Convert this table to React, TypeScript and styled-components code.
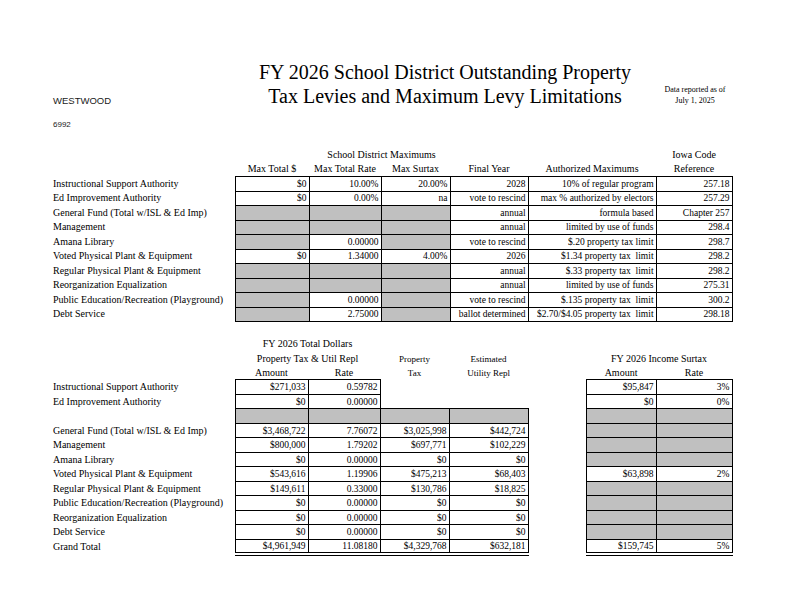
import React from "react";
import styled, { createGlobalStyle } from "styled-components";

const GlobalStyle = createGlobalStyle`
  html, body { margin: 0; padding: 0; background: #fff; }
  body { font-family: "Liberation Serif", "Times New Roman", serif; color: #000; }
`;

const Page = styled.div`
  width: 792px;
  height: 612px;
  box-sizing: border-box;
  padding: 60px 0 0 53px;
  overflow: hidden;
`;

const Header = styled.header`
  display: grid;
  grid-template-columns: 182px 420px 80px;
  align-items: start;
`;

const District = styled.div`
  padding-top: 35px;
  font-family: "Liberation Sans", Arial, sans-serif;
  color: #1a1a1a;
`;

const DistrictName = styled.div`
  font-size: 9.5px;
  line-height: 12px;
`;

const DistrictCode = styled.div`
  margin-top: 13px;
  font-size: 8px;
  line-height: 10px;
`;

const Title = styled.h1`
  margin: 0;
  font-weight: normal;
  font-size: 20px;
  line-height: 24px;
  text-align: center;
`;

const Note = styled.div`
  padding-top: 24px;
  font-size: 8px;
  line-height: 11px;
  text-align: center;
`;

const Sheet = styled.table<{ $top: number }>`
  margin-top: ${(p) => p.$top}px;
  border-collapse: collapse;
  table-layout: fixed;
  width: 679px;
`;

const HeadRow = styled.tr`
  height: 14.3px;
`;

const Row = styled.tr`
  height: 14.5px;
`;

const HeadCell = styled.td<{ $small?: boolean }>`
  padding: 0;
  text-align: center;
  vertical-align: middle;
  white-space: nowrap;
  font-size: ${(p) => (p.$small ? "9px" : "10px")};
  line-height: 12px;
`;

const Label = styled.td`
  padding: 0;
  font-size: 10px;
  line-height: 12px;
  white-space: nowrap;
  text-align: left;
`;

const Cell = styled.td<{ $gray?: boolean; $open?: boolean; $total?: boolean }>`
  padding: 0 2px 0 0;
  font-size: 9.5px;
  line-height: 12px;
  text-align: right;
  white-space: nowrap;
  vertical-align: middle;
  background: ${(p) => (p.$gray ? "#c0c0c0" : "transparent")};
  border: ${(p) => (p.$open ? "none" : "1px solid #000")};
  border-bottom: ${(p) => (p.$open ? "none" : p.$total ? "4px double #000" : "1px solid #000")};
`;

type TopRow = {
  label: string;
  vals: (string | null)[];
  year: string;
  auth: string;
  code: string;
};

const topRows: TopRow[] = [
  { label: "Instructional Support Authority", vals: ["$0", "10.00%", "20.00%"], year: "2028", auth: "10% of regular program", code: "257.18" },
  { label: "Ed Improvement Authority", vals: ["$0", "0.00%", "na"], year: "vote to rescind", auth: "max % authorized by electors", code: "257.29" },
  { label: "General Fund (Total w/ISL & Ed Imp)", vals: [null, null, null], year: "annual", auth: "formula based", code: "Chapter 257" },
  { label: "Management", vals: [null, null, null], year: "annual", auth: "limited by use of funds", code: "298.4" },
  { label: "Amana Library", vals: [null, "0.00000", null], year: "vote to rescind", auth: "$.20 property tax limit", code: "298.7" },
  { label: "Voted Physical Plant & Equipment", vals: ["$0", "1.34000", "4.00%"], year: "2026", auth: "$1.34 property tax\u00a0 limit", code: "298.2" },
  { label: "Regular Physical Plant & Equipment", vals: [null, null, null], year: "annual", auth: "$.33 property tax\u00a0 limit", code: "298.2" },
  { label: "Reorganization Equalization", vals: [null, null, null], year: "annual", auth: "limited by use of funds", code: "275.31" },
  { label: "Public Education/Recreation (Playground)", vals: [null, "0.00000", null], year: "vote to rescind", auth: "$.135 property tax\u00a0 limit", code: "300.2" },
  { label: "Debt Service", vals: [null, "2.75000", null], year: "ballot determined", auth: "$2.70/$4.05 property tax\u00a0 limit", code: "298.18" },
];

type BottomRow = {
  label: string;
  dollars: (string | null)[] | "gray";
  surtax: [string, string] | null;
  total?: boolean;
};

const bottomRows: BottomRow[] = [
  { label: "Instructional Support Authority", dollars: ["$271,033", "0.59782"], surtax: ["$95,847", "3%"] },
  { label: "Ed Improvement Authority", dollars: ["$0", "0.00000"], surtax: ["$0", "0%"] },
  { label: "", dollars: "gray", surtax: null },
  { label: "General Fund (Total w/ISL & Ed Imp)", dollars: ["$3,468,722", "7.76072", "$3,025,998", "$442,724"], surtax: null },
  { label: "Management", dollars: ["$800,000", "1.79202", "$697,771", "$102,229"], surtax: null },
  { label: "Amana Library", dollars: ["$0", "0.00000", "$0", "$0"], surtax: null },
  { label: "Voted Physical Plant & Equipment", dollars: ["$543,616", "1.19906", "$475,213", "$68,403"], surtax: ["$63,898", "2%"] },
  { label: "Regular Physical Plant & Equipment", dollars: ["$149,611", "0.33000", "$130,786", "$18,825"], surtax: null },
  { label: "Public Education/Recreation (Playground)", dollars: ["$0", "0.00000", "$0", "$0"], surtax: null },
  { label: "Reorganization Equalization", dollars: ["$0", "0.00000", "$0", "$0"], surtax: null },
  { label: "Debt Service", dollars: ["$0", "0.00000", "$0", "$0"], surtax: null },
  { label: "Grand Total", dollars: ["$4,961,949", "11.08180", "$4,329,768", "$632,181"], surtax: ["$159,745", "5%"], total: true },
];

const Gap = styled.td`
  padding: 0;
  border: none;
`;

function TopTable() {
  return (
    <Sheet $top={18}>
      <colgroup>
        <col style={{ width: 182 }} />
        <col style={{ width: 74 }} />
        <col style={{ width: 72 }} />
        <col style={{ width: 69 }} />
        <col style={{ width: 78 }} />
        <col style={{ width: 128 }} />
        <col style={{ width: 76 }} />
      </colgroup>
      <tbody>
        <HeadRow>
          <HeadCell />
          <HeadCell colSpan={4}>School District Maximums</HeadCell>
          <HeadCell />
          <HeadCell>Iowa Code</HeadCell>
        </HeadRow>
        <HeadRow>
          <HeadCell />
          <HeadCell>Max Total $</HeadCell>
          <HeadCell>Max Total Rate</HeadCell>
          <HeadCell>Max Surtax</HeadCell>
          <HeadCell>Final Year</HeadCell>
          <HeadCell>Authorized Maximums</HeadCell>
          <HeadCell>Reference</HeadCell>
        </HeadRow>
        {topRows.map((r) => (
          <Row key={r.label}>
            <Label>{r.label}</Label>
            {r.vals.map((v, i) => (
              <Cell key={i} $gray={v === null}>
                {v ?? ""}
              </Cell>
            ))}
            <Cell>{r.year}</Cell>
            <Cell>{r.auth}</Cell>
            <Cell>{r.code}</Cell>
          </Row>
        ))}
      </tbody>
    </Sheet>
  );
}

function BottomTable() {
  return (
    <Sheet $top={15}>
      <colgroup>
        <col style={{ width: 182 }} />
        <col style={{ width: 73 }} />
        <col style={{ width: 72 }} />
        <col style={{ width: 69 }} />
        <col style={{ width: 79 }} />
        <col style={{ width: 58 }} />
        <col style={{ width: 70 }} />
        <col style={{ width: 76 }} />
      </colgroup>
      <tbody>
        <HeadRow>
          <HeadCell />
          <HeadCell colSpan={2}>FY 2026 Total Dollars</HeadCell>
          <HeadCell colSpan={5} />
        </HeadRow>
        <HeadRow>
          <HeadCell />
          <HeadCell colSpan={2}>Property Tax &amp; Util Repl</HeadCell>
          <HeadCell $small>Property</HeadCell>
          <HeadCell $small>Estimated</HeadCell>
          <HeadCell />
          <HeadCell colSpan={2}>FY 2026 Income Surtax</HeadCell>
        </HeadRow>
        <HeadRow>
          <HeadCell />
          <HeadCell>Amount</HeadCell>
          <HeadCell>Rate</HeadCell>
          <HeadCell $small>Tax</HeadCell>
          <HeadCell $small>Utility Repl</HeadCell>
          <HeadCell />
          <HeadCell>Amount</HeadCell>
          <HeadCell>Rate</HeadCell>
        </HeadRow>
        {bottomRows.map((r, idx) => (
          <Row key={idx}>
            <Label>{r.label}</Label>
            {r.dollars === "gray"
              ? [0, 1, 2, 3].map((i) => <Cell key={i} $gray />)
              : [0, 1, 2, 3].map((i) => {
                  const v = (r.dollars as (string | null)[])[i];
                  return v === undefined ? (
                    <Cell key={i} $open />
                  ) : (
                    <Cell key={i} $total={r.total}>
                      {v}
                    </Cell>
                  );
                })}
            <Gap />
            {r.surtax ? (
              <>
                <Cell $total={r.total}>{r.surtax[0]}</Cell>
                <Cell $total={r.total}>{r.surtax[1]}</Cell>
              </>
            ) : (
              <>
                <Cell $gray />
                <Cell $gray />
              </>
            )}
          </Row>
        ))}
      </tbody>
    </Sheet>
  );
}

export default function App() {
  return (
    <>
      <GlobalStyle />
      <Page>
        <Header>
          <District>
            <DistrictName>WESTWOOD</DistrictName>
            <DistrictCode>6992</DistrictCode>
          </District>
          <Title>
            FY 2026 School District Outstanding Property
            <br />
            Tax Levies and Maximum Levy Limitations
          </Title>
          <Note>
            Data reported as of
            <br />
            July 1, 2025
          </Note>
        </Header>
        <TopTable />
        <BottomTable />
      </Page>
    </>
  );
}
